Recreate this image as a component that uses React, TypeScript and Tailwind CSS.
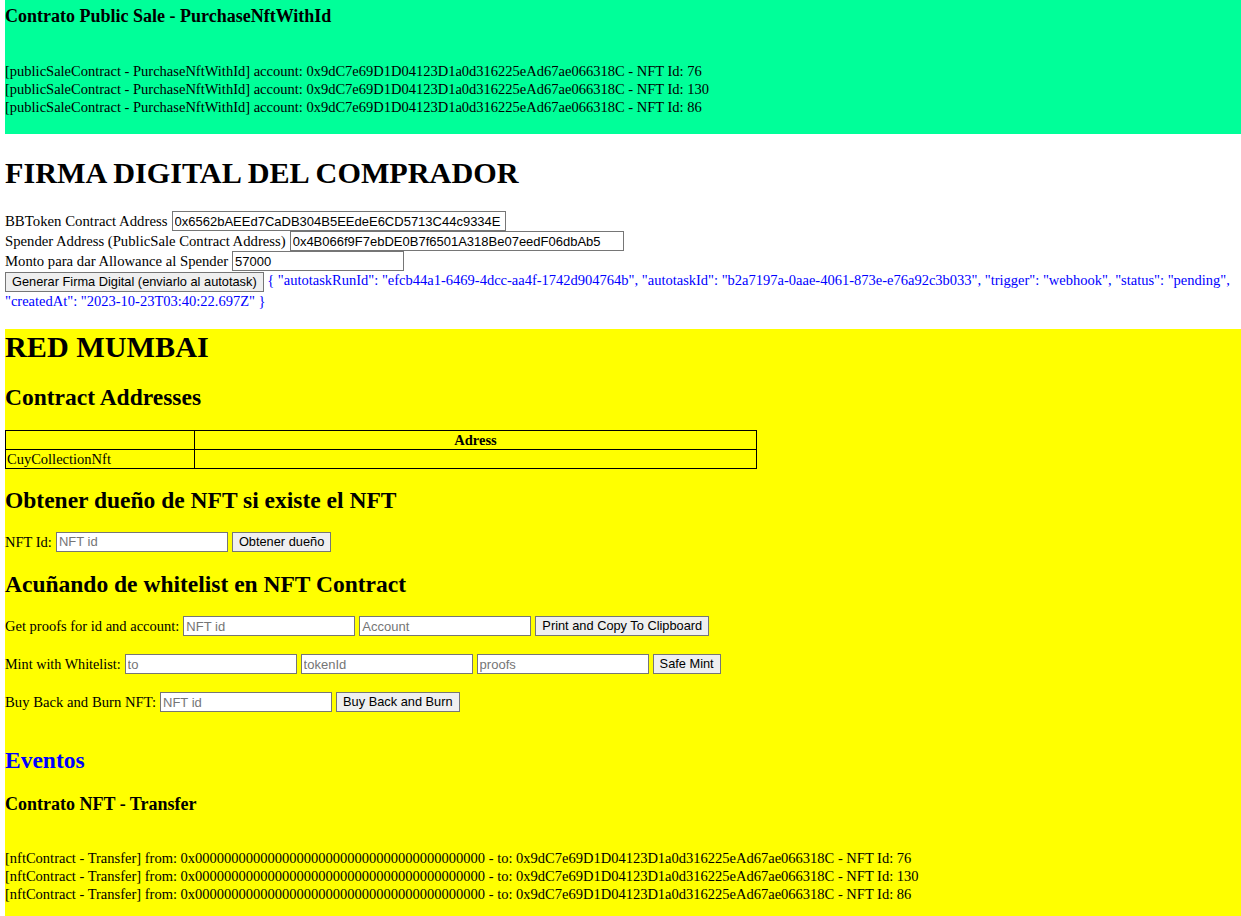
import React from "react";

const ACCOUNT = "0x9dC7e69D1D04123D1a0d316225eAd67ae066318C";
const ZERO = "0x0000000000000000000000000000000000000000";
const nftIds = [76, 130, 86];

const inputCls =
  "h-[20px] border border-[#767676] bg-white px-[2px] py-[1px] font-['Liberation_Sans',Arial,sans-serif] text-[13px] leading-[16px] text-black placeholder:text-[#757575] outline-none";

const buttonCls =
  "h-[20px] shrink-0 border border-[#767676] bg-[#efefef] px-[6px] font-['Liberation_Sans',Arial,sans-serif] text-[12.8px] leading-[16px] text-black";

function Field({ placeholder, value, className = "w-[172px]" }: { placeholder?: string; value?: string; className?: string }) {
  return <input className={`${inputCls} ${className}`} placeholder={placeholder} defaultValue={value} />;
}

const autotask =
  '{ "autotaskRunId": "efcb44a1-6469-4dcc-aa4f-1742d904764b", "autotaskId": "b2a7197a-0aae-4061-873e-e76a92c3b033", "trigger": "webhook", "status": "pending", "createdAt": "2023-10-23T03:40:22.697Z" }';

export default function App() {
  return (
    <div className="flex min-h-screen flex-col bg-white pl-[5px] font-['Liberation_Serif','Times_New_Roman',serif] text-[14.5px] leading-[18px] text-black">
      {/* Public sale events */}
      <div className="bg-[#00ff99] pt-[6px] pb-[18px]">
        <h3 className="text-[18px] font-bold leading-[21.5px]">Contrato Public Sale - PurchaseNftWithId</h3>
        <div className="mt-[34.5px]">
          {nftIds.map((id) => (
            <div key={id}>
              [publicSaleContract - PurchaseNftWithId] account: {ACCOUNT} - NFT Id: {id}
            </div>
          ))}
        </div>
      </div>

      {/* Firma digital */}
      <h1 className="mt-[21px] mb-[19px] text-[30.2px] font-bold leading-[37px]">FIRMA DIGITAL DEL COMPRADOR</h1>
      <div className="flex h-[20px] items-center gap-[4px]">
        <span className="text-[14.8px]">BBToken Contract Address</span>
        <Field className="w-[334px]" value="0x6562bAEEd7CaDB304B5EEdeE6CD5713C44c9334E" />
      </div>
      <div className="flex h-[20px] items-center gap-[4px]">
        <span className="text-[14.7px]">Spender Address (PublicSale Contract Address)</span>
        <Field className="w-[334px]" value="0x4B066f9F7ebDE0B7f6501A318Be07eedF06dbAb5" />
      </div>
      <div className="flex h-[20px] items-center gap-[4px]">
        <span className="text-[14.7px]">Monto para dar Allowance al Spender</span>
        <Field value="57000" />
      </div>
      <div className="leading-[18px]">
        <button className={`${buttonCls} align-middle`}>Generar Firma Digital (enviarlo al autotask)</button>{" "}
        <span className="text-[#0000ff]">{autotask}</span>
      </div>

      {/* Red Mumbai */}
      <div className="mt-[19px] flex-1 bg-[#ffff00] pb-[15px]">
        <h1 className="text-[30.2px] font-bold leading-[37px]">RED MUMBAI</h1>
        <h2 className="mt-[18px] mb-[19px] text-[23.5px] font-bold leading-[27.6px]">Contract Addresses</h2>
        <table className="w-[752px] border-collapse">
          <thead>
            <tr>
              <th className="w-[189px] border border-black p-0 leading-[18px]"></th>
              <th className="border border-black p-0 text-center font-bold leading-[18px]">Adress</th>
            </tr>
          </thead>
          <tbody>
            <tr>
              <td className="border border-black px-[1px] py-0 text-left leading-[18px]">CuyCollectionNft</td>
              <td className="border border-black p-0 leading-[18px]"></td>
            </tr>
          </tbody>
        </table>

        <h2 className="mt-[18px] mb-[17px] text-[23.5px] font-bold leading-[27.6px]">Obtener dueño de NFT si existe el NFT</h2>
        <div className="flex h-[20px] items-center gap-[4px]">
          <span>NFT Id:</span>
          <Field placeholder="NFT id" />
          <button className={buttonCls}>Obtener dueño</button>
        </div>

        <h2 className="mt-[19px] mb-[18px] text-[23.5px] font-bold leading-[27.6px]">Acuñando de whitelist en NFT Contract</h2>
        <div className="flex h-[20px] items-center gap-[4px]">
          <span>Get proofs for id and account:</span>
          <Field placeholder="NFT id" />
          <Field placeholder="Account" />
          <button className={buttonCls}>Print and Copy To Clipboard</button>
        </div>
        <div className="mt-[18px] flex h-[20px] items-center gap-[4px]">
          <span className="text-[14.2px]">Mint with Whitelist:</span>
          <Field placeholder="to" />
          <Field placeholder="tokenId" />
          <Field placeholder="proofs" />
          <button className={buttonCls}>Safe Mint</button>
        </div>
        <div className="mt-[18px] flex h-[20px] items-center gap-[4px]">
          <span className="text-[14.7px]">Buy Back and Burn NFT:</span>
          <Field placeholder="NFT id" />
          <button className={buttonCls}>Buy Back and Burn</button>
        </div>

        {/* Eventos */}
        <h2 className="mt-[35px] text-[23.5px] font-bold leading-[27.6px] text-[#0000ff]">Eventos</h2>
        <h3 className="mt-[18.6px] text-[18px] font-bold leading-[21.5px]">Contrato NFT - Transfer</h3>
        <div className="mt-[33.8px]">
          {nftIds.map((id) => (
            <div key={id}>
              [nftContract - Transfer] from: {ZERO} - to: {ACCOUNT} - NFT Id: {id}
            </div>
          ))}
        </div>
      </div>
    </div>
  );
}
